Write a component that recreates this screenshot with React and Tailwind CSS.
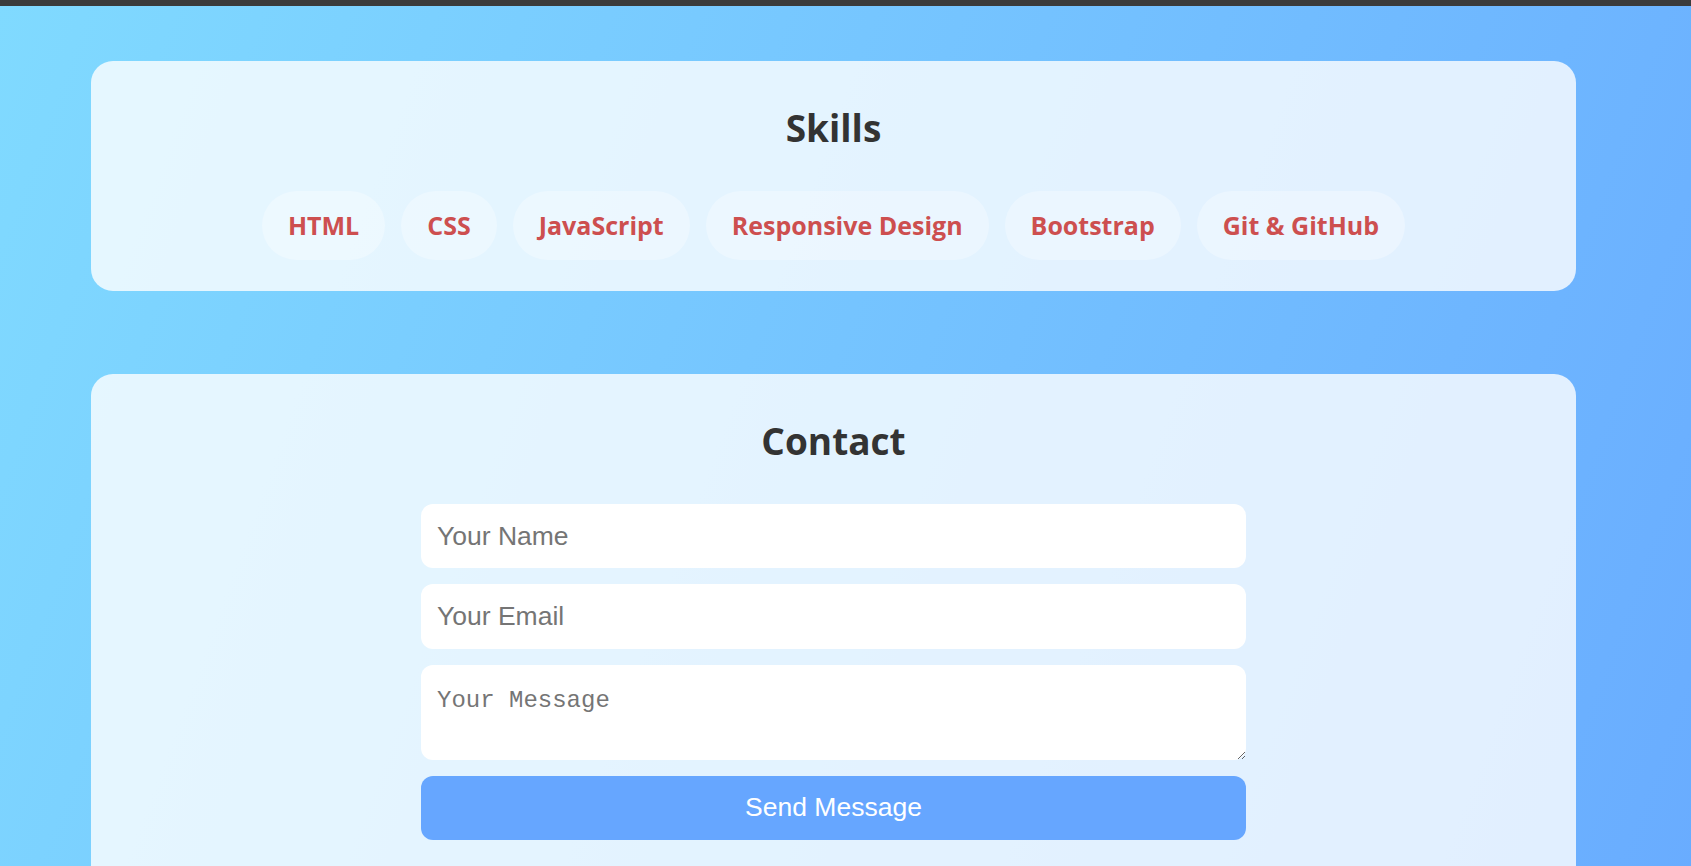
const skills = ['HTML', 'CSS', 'JavaScript', 'Responsive Design', 'Bootstrap', 'Git & GitHub']

export default function App() {

    return (

        <div className="min-h-[866px] bg-[linear-gradient(110deg,#80daff,#69acff)] overflow-hidden">

            <div className="h-[6px] bg-[#3b3b3b]" />

            <div className="pt-[55px] pl-[91px]">

                {/* SKILLS */}

                <section className="w-[1485px] rounded-[22px] bg-white/80 pt-[46px] pb-[31px] text-center">

                    <h2
                        className="text-[37px] leading-[42px] font-bold text-[#333]"
                        style={{ fontFamily: '"Open Sans", "Noto Sans", sans-serif' }}
                    >
                        Skills
                    </h2>

                    <div className="mt-[42px] flex justify-center gap-[16px]">

                        {skills.map(skill => (

                            <span
                                key={skill}
                                className="h-[69px] px-[26px] rounded-full bg-white/30 flex items-center text-[25px] font-bold text-[#cd4f4f]"
                                style={{ fontFamily: '"Open Sans", "Noto Sans", sans-serif' }}
                            >
                                {skill}
                            </span>

                        ))}

                    </div>

                </section>


                {/* CONTACT */}

                <section className="mt-[83px] w-[1485px] rounded-[22px] bg-white/80 pt-[46px] pb-[60px] text-center">

                    <h2
                        className="text-[37px] leading-[42px] font-bold text-[#333]"
                        style={{ fontFamily: '"Open Sans", "Noto Sans", sans-serif' }}
                    >
                        Contact
                    </h2>

                    <form
                        className="mt-[42px] w-[825px] mx-auto flex flex-col gap-[16px]"
                        style={{ fontFamily: '"Liberation Sans", Arial, sans-serif' }}
                        onSubmit={e => e.preventDefault()}
                    >

                        <input
                            type="text"
                            placeholder="Your Name"
                            className="h-[64px] px-[16px] rounded-[12px] bg-white text-[26.5px] text-[#333] placeholder:text-[#757575] outline-none"
                        />

                        <input
                            type="email"
                            placeholder="Your Email"
                            className="h-[65px] px-[16px] rounded-[12px] bg-white text-[26.5px] text-[#333] placeholder:text-[#757575] outline-none"
                        />

                        <textarea
                            placeholder="Your Message"
                            className="h-[95px] px-[16px] pt-[21px] pb-[10px] rounded-[12px] bg-white text-[24px] leading-[30px] text-[#333] placeholder:text-[#757575] outline-none"
                            style={{ fontFamily: '"Liberation Mono", monospace' }}
                        />

                        <button
                            type="submit"
                            className="h-[64px] rounded-[12px] bg-[#66a6ff] text-white text-[26.5px]"
                        >
                            Send Message
                        </button>

                    </form>

                </section>

            </div>

        </div>

    )
}
